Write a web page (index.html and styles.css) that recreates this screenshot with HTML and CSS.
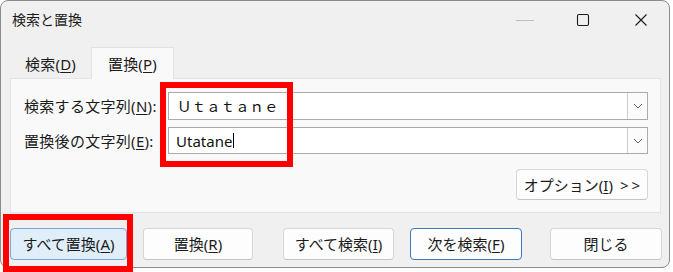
FILE: index.html
```html
<!DOCTYPE html>
<html lang="ja">
<head>
<meta charset="utf-8">
<title>検索と置換</title>
<link rel="stylesheet" href="styles.css">
</head>
<body>
<div class="window">
  <div class="titlebar">
    <div class="title">検索と置換</div>
    <div class="caption">
      <div class="cbtn"><svg class="ico" width="20" height="20" viewBox="0 0 20 20"><line x1="1" y1="10.5" x2="19" y2="10.5" stroke="#bdbdbd" stroke-width="1"/></svg></div>
      <div class="cbtn"><svg class="ico" width="14" height="14" viewBox="0 0 14 14"><rect x="1.5" y="1.5" width="11" height="11" rx="1.5" fill="none" stroke="#1a1a1a" stroke-width="1.1"/></svg></div>
      <div class="cbtn"><svg class="ico" width="14" height="14" viewBox="0 0 14 14"><path d="M1.5 1.5 L12.5 12.5 M12.5 1.5 L1.5 12.5" stroke="#1a1a1a" stroke-width="1.1" fill="none"/></svg></div>
    </div>
  </div>
  <div class="tabs">
    <div class="tab">検索(<u>D</u>)</div>
    <div class="tab active">置換(<u>P</u>)</div>
  </div>
  <div class="panel">
    <div class="fields">
      <div class="lbl">検索する文字列(<u>N</u>):</div>
      <div class="combo">
        <div class="ctext wide">Ｕｔａｔａｎｅ</div>
        <div class="drop"><svg width="10" height="6" viewBox="0 0 10 6"><path d="M1 1 L5 5 L9 1" stroke="#5f5f5f" stroke-width="1" fill="none"/></svg></div>
      </div>
      <div class="lbl">置換後の文字列(<u>E</u>):</div>
      <div class="combo">
        <div class="ctext">Utatane<span class="caret"></span></div>
        <div class="drop"><svg width="10" height="6" viewBox="0 0 10 6"><path d="M1 1 L5 5 L9 1" stroke="#5f5f5f" stroke-width="1" fill="none"/></svg></div>
      </div>
    </div>
    <div class="optrow">
      <button class="btn opt">オプション(<u>I</u>)<span class="more">&gt;&gt;</span></button>
    </div>
  </div>
  <div class="actions">
    <button class="btn act b1 hot">すべて置換(<u>A</u>)</button>
    <button class="btn act b2">置換(<u>R</u>)</button>
    <button class="btn act b3">すべて検索(<u>I</u>)</button>
    <button class="btn act b4 def">次を検索(<u>F</u>)</button>
    <button class="btn act b5">閉じる</button>
  </div>
</div>
<div class="mark mark1"></div>
<div class="mark mark2"></div>
</body>
</html>
```

FILE: styles.css
```css
* { box-sizing: border-box; }
html, body { margin: 0; padding: 0; background: #ffffff; }
body {
  width: 673px;
  height: 272px;
  overflow: hidden;
  font-family: "Noto Sans", "Noto Sans CJK JP", sans-serif;
  color: #1b1b1b;
}
.window {
  width: 670px;
  height: 268px;
  border: 1px solid #8c8c8c;
  border-radius: 8px;
  background: #f0f0f0;
  overflow: hidden;
}
.titlebar {
  height: 38px;
  display: flex;
  align-items: center;
  justify-content: space-between;
}
.title {
  padding-left: 11px;
  font-size: 14px;
  line-height: 20px;
}
.caption { display: flex; height: 38px; }
.cbtn {
  width: 58px;
  height: 38px;
  display: flex;
  align-items: center;
  justify-content: center;
}
.cbtn:last-child { width: 57px; }
.ico { display: block; }
.tabs {
  height: 39px;
  display: flex;
  align-items: flex-end;
  padding-left: 9px;
}
.tab {
  height: 32px;
  margin-bottom: -1px;
  display: flex;
  align-items: center;
  justify-content: center;
  font-size: 15px;
  line-height: 20px;
  width: 81px;
  padding-top: 1px;
  letter-spacing: 0.2px;
}
.tab.active {
  width: 83px;
  background: #f9f9f9;
  border: 1px solid #e3e3e3;
  border-bottom: none;
  position: relative;
  z-index: 1;
}
u { text-decoration: underline; text-underline-offset: 2px; text-decoration-thickness: 1px; }
.panel {
  margin: 0 8px 0 9px;
  height: 135px;
  background: #f9f9f9;
  border: 1px solid #e3e3e3;
  padding: 13px 12px 0 13px;
}
.fields {
  display: grid;
  grid-template-columns: 144px 1fr;
  grid-template-rows: 28px 27px;
  row-gap: 7px;
}
.lbl {
  align-self: center;
  font-size: 15px;
  line-height: 20px;
  letter-spacing: 0.3px;
}
.combo {
  display: flex;
  background: #ffffff;
  border: 1px solid #ababab;
}
.ctext {
  flex: 1;
  display: flex;
  align-items: center;
  padding-left: 7px;
  font-size: 15px;
  line-height: 20px;
  color: #111;
}
.ctext.wide { font-size: 14.5px; padding-left: 8px; }
.caret {
  display: inline-block;
  width: 1px;
  height: 15px;
  background: #000;
  margin-left: 1px;
}
.drop {
  width: 20px;
  border-left: 1px solid #cfcfcf;
  background: #fbfbfb;
  display: flex;
  align-items: center;
  justify-content: center;
}
.drop svg { display: block; }
.optrow {
  margin-top: 15px;
  display: flex;
  justify-content: flex-end;
}
.btn {
  font-family: inherit;
  color: #1b1b1b;
  font-size: 15px;
  line-height: 20px;
  background: #fdfdfd;
  border: 1px solid #d6d6d6;
  border-bottom-color: #c4c4c4;
  border-radius: 4px;
  padding: 0;
  display: flex;
  align-items: center;
  justify-content: center;
}
.opt { width: 132px; height: 31px; }
.more { margin-left: 7px; letter-spacing: 3px; margin-right: -3px; }
.actions {
  margin-top: 15px;
  display: flex;
  padding-left: 9px;
}
.act { height: 32px; }
.b1 { width: 117px; }
.b2 { width: 110px; margin-left: 16px; }
.b3 { width: 111px; margin-left: 30px; }
.b4 { width: 112px; margin-left: 16px; }
.b5 { width: 112px; margin-left: 28px; }
.hot {
  background: #e0eef9;
  border-color: #7ba6d3;
}
.def {
  border-color: #3a78bd;
}
.mark {
  position: absolute;
  border: 6px solid #ff0000;
}
.mark1 { left: 160px; top: 82px; width: 133px; height: 85px; }
.mark2 { left: 3px; top: 214px; width: 130px; height: 58px; }
```
